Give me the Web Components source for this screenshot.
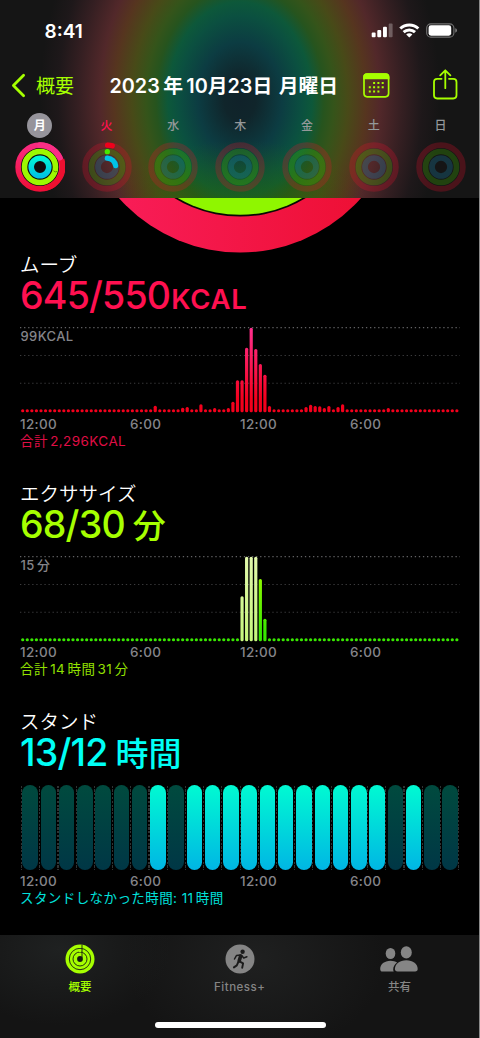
<!DOCTYPE html>
<html lang="ja">
  <head>
    <meta charset="utf-8">
    <title>フィットネス</title>
    <style>
      html, body {
        margin: 0;
        background: #000;
      }

      body {
        font-family: Inter, "Noto Sans CJK JP", sans-serif;
        color: #fff;
      }
    </style>
  </head>
  <body>

    <fitness-app></fitness-app>

    <script>
      (function fitness(document, customElements) {
        'use strict';

        const SVG_ICONS = {
          back: `<svg width="15" height="25" viewBox="0 0 15 25" fill="none" stroke="currentColor" stroke-width="2.8" stroke-linecap="round" stroke-linejoin="round"><path d="M12.6 2.3 2.4 12.5l10.2 10.2"/></svg>`,
          calendar: `<svg width="27" height="25" viewBox="0 0 27 25"><rect x="1" y="1" width="24.6" height="22.8" rx="3.2" fill="none" stroke="currentColor" stroke-width="1.7"/><path d="M.2 6.3V4A3.8 3.8 0 0 1 4 .2h18.6A3.8 3.8 0 0 1 26.4 4v2.3z" fill="currentColor"/><path d="M10.1 10h2m2.3 0h2m2.3 0h2M5.800 14.300h2m2.300 0h2m2.300 0h2m2.300 0h2M5.800 18.500h2m2.300 0h2m2.300 0h2" stroke="currentColor" stroke-width="1.9"/></svg>`,
          share: `<svg width="25" height="31" viewBox="0 0 25 31" fill="none" stroke="currentColor" stroke-width="1.8" stroke-linecap="round" stroke-linejoin="round"><path d="M8.6 9.8H4.2A3.2 3.2 0 0 0 1 13v13.3a3.2 3.2 0 0 0 3.2 3.2h16.1a3.2 3.2 0 0 0 3.2-3.2V13a3.2 3.2 0 0 0-3.2-3.2H16"/><path d="M12.3 19.2V1.4M7.2 6.4l5.1-5.1 5.1 5.1"/></svg>`,
          signal: `<svg width="22" height="15" viewBox="0 0 22 15" fill="#fff"><rect x=".7" y="9.6" width="3.9" height="4.7" rx="1"/><rect x="6.3" y="7" width="3.9" height="7.3" rx="1"/><rect x="12" y="3.7" width="3.9" height="10.6" rx="1"/><rect x="17.7" y=".4" width="3.9" height="13.9" rx="1" opacity=".28"/></svg>`,
          wifi: `<svg width="21" height="15" viewBox="0 0 21 15" fill="none" stroke="#fff" stroke-width="3"><path d="M1.300 5.500a13 13 0 0 1 18 0"/><path d="M4.600 9.200a8.300 8.300 0 0 1 11.400 0"/><path d="M10.300 14.500 7.200 11.500a4.400 4.400 0 0 1 6.200 0z" fill="#fff" stroke="none"/></svg>`,
          battery: `<svg width="32" height="15" viewBox="0 0 32 15"><rect x=".7" y=".9" width="27.2" height="13.2" rx="4.2" fill="none" stroke="#fff" stroke-opacity=".4" stroke-width="1.1"/><rect x="2.6" y="2.3" width="22.600" height="10.400" rx="2.400" fill="#fff"/><path d="M29.3 5.3v4.4c1-.3 1.7-1.2 1.7-2.2s-.7-1.900-1.700-2.200z" fill="#fff" opacity=".45"/></svg>`,
          rings: `<svg width="30" height="30" viewBox="0 0 30 30"><circle cx="15" cy="15" r="14.500" fill="currentColor"/><g fill="none" stroke="#161a12" stroke-width=".9"><circle cx="15" cy="15" r="10.700"/><circle cx="15" cy="15" r="7"/></g><circle cx="15" cy="15" r="2.900" fill="#161a12"/><path d="M17 .7v13" stroke="#161a12" stroke-width=".9"/><path d="M15 4.100V1M15 8V5M15 12V9" stroke="currentColor" stroke-width="2"/></svg>`,
          runner: `<svg width="30" height="30" viewBox="0 0 30 30"><circle cx="15" cy="15" r="14.500" fill="currentColor"/><circle cx="17.600" cy="7.700" r="2.200" fill="#1b1b1b"/><g fill="none" stroke="#1b1b1b" stroke-linecap="round" stroke-linejoin="round"><path d="M15.700 12 14.200 16.800" stroke-width="3.600"/><path d="M15.500 11l-4.100.6-1.900 3.400M16.900 11.800l1.800 2.200 3.200-1.300" stroke-width="1.500"/><path d="M14.500 17.400l3.600 2-.9 4.400M13.300 18l-1.500 3.400-2.900 2" stroke-width="1.900"/></g></svg>`,
          people: `<svg width="38" height="26" viewBox="0 0 38 26" fill="currentColor"><ellipse cx="10.500" cy="7.500" rx="4.800" ry="5.500"/><ellipse cx="26.300" cy="6.400" rx="5.500" ry="6.100"/><path d="M.2 22.900c0-4.500 4.200-8.100 10.300-8.100 2.700 0 4.900.7 6.600 1.800-2.600 1.900-3.900 4.400-3.900 7 0 .7.100 1.300.5 1.900H2.600C1 25.500.2 24.600.2 22.900z"/><path d="M14.900 23.100c0-4.900 4.700-8.800 11.400-8.800s11.400 3.900 11.400 8.800c0 1.600-.9 2.400-2.600 2.400H17.500c-1.700 0-2.600-.8-2.600-2.400z"/></svg>`
        };

        class AppIcon extends HTMLElement {
          constructor() {
            super();
            this.attachShadow({mode: 'open'});
          }

          connectedCallback() {
            this.shadowRoot.innerHTML = `
              <style>
                :host { display: block; line-height: 0; }
                svg { display: block; }
              </style>
              ${SVG_ICONS[this.getAttribute('name')]}
            `;
          }
        }

        class StatusBar extends HTMLElement {
          constructor() {
            super();
            this.attachShadow({mode: 'open'}).innerHTML = `
              <style>
                :host {
                  display: flex;
                  align-items: center;
                  height: 61px;
                  box-sizing: border-box;
                  padding: 0 21.500px 0 44.500px;
                  font-size: 19px;
                  font-weight: 600;
                }
                .time { flex: 1; padding-top: 1px; }
                app-icon + app-icon { margin-left: 6px; }
              </style>
              <span class="time">8:41</span>
              <app-icon name="signal"></app-icon>
              <app-icon name="wifi"></app-icon>
              <app-icon name="battery"></app-icon>
            `;
          }
        }

        class NavBar extends HTMLElement {
          constructor() {
            super();
            this.attachShadow({mode: 'open'}).innerHTML = `
              <style>
                :host {
                  display: flex;
                  align-items: center;
                  height: 48px;
                  box-sizing: border-box;
                  padding: 0 21.500px 0 11px;
                  color: #a6ff00;
                  white-space: nowrap;
                }
                .back { display: flex; align-items: center; gap: 10px; width: 98.500px; font-size: 19px; }
                .back span, .title { margin-top: -2px; }
                .title { flex: 1; color: #fff; font-size: 19.800px; font-weight: 600; word-spacing: 1.500px; }
                .share { margin: -2px 0 0 42.500px; }
              </style>
              <div class="back"><app-icon name="back"></app-icon><span>概要</span></div>
              <div class="title"><slot></slot></div>
              <app-icon name="calendar"></app-icon>
              <app-icon class="share" name="share"></app-icon>
            `;
          }
        }

        // One weekday with its miniature activity rings
        class DayRings extends HTMLElement {
          constructor() {
            super();
            this.attachShadow({mode: 'open'});
          }

          connectedCallback() {
            const state = this.getAttribute('state') || 'empty';
            const tracks = `
              <circle cx="25" cy="25" r="21.900" stroke="#e8102c"/>
              <circle cx="25" cy="25" r="15.500" stroke="#48c800"/>
              <circle cx="25" cy="25" r="9" stroke="#1a94c0"/>`;
            const drawings = {
              empty: `<g opacity=".25" stroke-width="5.700">${tracks}</g>`,
              today: `<g opacity=".25" stroke-width="5.700">${tracks}</g>
                <g stroke-width="5.200" stroke-linecap="round">
                  <path d="M25.500 3.100a22 22 0 0 1 4.800.7" stroke="#f0001c"/>
                  <path d="M25.300 9.700h.1" stroke="#48e800"/>
                  <path d="M25.300 16.100a9 9 0 0 1 8.300 7.600" stroke="#00c4e8"/>
                </g>`,
              full: `
                <defs>
                  <linearGradient id="m" x1="0" y1="0" x2="0" y2="1"><stop offset="0" stop-color="#fa2a80"/><stop offset="1" stop-color="#ee1038"/></linearGradient>
                  <linearGradient id="s" x1="0" y1="0" x2="0" y2="1"><stop offset="0" stop-color="#00f4d8"/><stop offset="1" stop-color="#00c4e4"/></linearGradient>
                </defs>
                <circle cx="25" cy="25" r="24.800" fill="#100d0e"/>
                <g stroke-width="5.600">
                  <circle cx="25" cy="25" r="21.900" stroke="url(#m)"/>
                  <path d="M46.500 17.500A22 22 0 0 1 30 46.300" stroke="#ec1030"/>
                  <path d="M25 3.100a21.900 21.900 0 0 1 19.800 12.600" stroke="#fb2f85" stroke-linecap="round"/>
                  <circle cx="25" cy="25" r="15.500" stroke="#9cf800"/>
                  <circle cx="25" cy="25" r="8.800" stroke="url(#s)"/>
                </g>
                <path d="M38.500 28.800q1.800 2 3.500.5" stroke="#5a9800" stroke-width="1"/>`
            };
            this.shadowRoot.innerHTML = `
              <style>
                :host {
                  display: flex;
                  flex: 1;
                  flex-direction: column;
                  align-items: center;
                  color: #94989a;
                  font-size: 12px;
                  font-weight: 500;
                }
                .name {
                  width: 25px;
                  height: 25px;
                  border-radius: 50%;
                  line-height: 26.500px;
                  text-align: center;
                }
                :host([state="full"]) .name { background: #96949b; color: #fff; font-weight: 700; }
                :host([state="today"]) { color: #ff1050; }
                svg { margin-top: 4px; }
              </style>
              <span class="name"><slot></slot></span>
              <svg width="50" height="50" viewBox="0 0 50 50" fill="none">${drawings[state]}</svg>
            `;
          }
        }

        class AppHeader extends HTMLElement {
          constructor() {
            super();
            this.attachShadow({mode: 'open'}).innerHTML = `
              <style>
                :host {
                  display: block;
                  height: 198px;
                  background:
                    radial-gradient(ellipse 130px 75px at 240px 215px, rgba(44, 104, 0, .6), rgba(44, 104, 0, 0)),
                    radial-gradient(ellipse 200px 270px at 240px 99px, #10222a 0, #10252b 8%, #0c3c42 21%, #0b5040 31%, #0d583a 36%, #26541e 42%, #35541a 47%, #484a18 54%, #56351f 63%, #52282a 70%, #351f22 81%, #1e181a 91%, #151515 100%);
                }
                .week { display: flex; padding: 4px 5px 0 6.300px; }
              </style>
              <status-bar></status-bar>
              <nav-bar><slot name="title"></slot></nav-bar>
              <div class="week"><slot></slot></div>
            `;
          }
        }

        // Lower edge of the day's rings, the rest is behind the header
        class RingsEdge extends HTMLElement {
          constructor() {
            super();
            this.attachShadow({mode: 'open'}).innerHTML = `
              <style>
                :host { display: block; height: 55px; }
                svg { display: block; }
              </style>
              <svg width="479" height="55" viewBox="0 198 479 55">
                <defs>
                  <linearGradient id="move"><stop offset=".15" stop-color="#f81c56"/><stop offset=".85" stop-color="#ee1036"/></linearGradient>
                </defs>
                <circle cx="240" cy="91" r="161.600" fill="url(#move)"/>
                <circle cx="240" cy="91" r="125.600" fill="#080a04"/>
                <circle cx="240" cy="91" r="123.800" fill="#8ff600"/>
              </svg>
            `;
          }
        }

        // Quarter-hour bars, "values" holds index:height pairs above the resting dots
        class BarChart extends HTMLElement {
          constructor() {
            super();
            this.attachShadow({mode: 'open'});
          }

          connectedCallback() {
            const heights = new Map((this.getAttribute('values') || '').split(' ').map(p => p.split(':').map(Number)));
            const green = this.getAttribute('kind') === 'exercise';
            let bars = '';
            for (let i = 0; i < 96; i++) {
              const h = heights.get(i) || 3.1;
              const x = 1.1 + i * 4.57;
              const pale = green && i >= 48 && i <= 51;
              bars += `<rect x="${x.toFixed(2)}" y="${(85.3 - h).toFixed(2)}" width="3.2" height="${h}" rx="1.5" fill="url(#${pale ? 'pale' : 'bar'})"/>`;
            }
            this.shadowRoot.innerHTML = `
              <style>
                :host { display: block; position: relative; height: 86px; }
                svg { display: block; }
                .max {
                  position: absolute;
                  left: .500px;
                  top: 1px;
                  color: #85858a;
                  font-size: 13px;
                  font-weight: 500;
                  line-height: 16px;
                  letter-spacing: .4px;
                }
              </style>
              <svg width="440" height="86" viewBox="0 0 440 86">
                <defs>
                  <linearGradient id="bar" gradientUnits="userSpaceOnUse" x1="0" y1="0" x2="0" y2="85">
                    <stop offset="0" stop-color="${green ? '#b0ff00' : '#ff3090'}"/>
                    <stop offset="${green ? '.9' : '.85'}" stop-color="${green ? '#38e800' : '#f4001c'}"/>
                  </linearGradient>
                  <linearGradient id="pale" gradientUnits="userSpaceOnUse" x1="0" y1="0" x2="0" y2="85">
                    <stop offset="0" stop-color="#e2f8ac"/><stop offset="1" stop-color="#c6f67c"/>
                  </linearGradient>
                </defs>
                <g stroke-width="1.1" stroke-dasharray="1.3 2.77">
                  <path d="M0 .6h440" stroke="#626264"/>
                  <path d="M0 28.5h440M0 56.3h440" stroke="#3c3c3e"/>
                </g>
                ${bars}
              </svg>
              <span class="max"><slot></slot></span>
            `;
          }
        }

        class StandChart extends HTMLElement {
          constructor() {
            super();
            this.attachShadow({mode: 'open'});
          }

          connectedCallback() {
            const hours = this.getAttribute('hours');
            this.shadowRoot.innerHTML = `
              <style>
                :host {
                  display: grid;
                  grid-template-columns: repeat(24, 1fr);
                  width: 438.200px;
                  height: 86px;
                  margin-left: .500px;
                  background: repeating-linear-gradient(#000 0 1.600px, transparent 1.600px 3.800px), repeating-linear-gradient(90deg, #303334 0 1.100px, transparent 1.100px 18.210px);
                }
                i {
                  height: 85px;
                  margin: .500px .900px 0 1.900px;
                  border-radius: 8px;
                  background: linear-gradient(#004a3e, #003746);
                }
                i.on { background: linear-gradient(#00fad2, #00b6e4); }
              </style>
              ${[...hours].map(h => `<i class="${h === '1' ? 'on' : ''}"></i>`).join('')}
            `;
          }
        }

        class ActivitySection extends HTMLElement {
          constructor() {
            super();
            this.attachShadow({mode: 'open'}).innerHTML = `
              <style>
                :host {
                  display: block;
                  height: 228.700px;
                  padding-left: 20px;
                  white-space: nowrap;
                }
                .title { height: 24px; font-size: 19.500px; line-height: 25px; font-weight: 350; }
                .value { height: 50px; color: var(--accent); font-size: 37.500px; line-height: 38px; font-weight: 500; letter-spacing: -.800px; }
                .hours { display: grid; grid-template-columns: repeat(4, 110px); height: 16px; padding-top: 2.500px; color: #85858a; font-size: 13.500px; font-weight: 500; line-height: 16px; letter-spacing: .300px; }
                .total { color: var(--accent); opacity: .88; font-size: 13.500px; line-height: 18.500px; letter-spacing: .420px; }
              </style>
              <div class="title"><slot name="title"></slot></div>
              <div class="value"><slot name="value"></slot></div>
              <slot></slot>
              <div class="hours"><span>12:00</span><span>6:00</span><span>12:00</span><span>6:00</span></div>
              <div class="total"><slot name="total"></slot></div>
            `;
          }
        }

        class TabItem extends HTMLElement {
          constructor() {
            super();
            this.attachShadow({mode: 'open'});
          }

          connectedCallback() {
            this.shadowRoot.innerHTML = `
              <style>
                :host {
                  display: flex;
                  flex: 1;
                  flex-direction: column;
                  align-items: center;
                  color: #858585;
                  font-size: 11.500px;
                  font-weight: 500;
                }
                :host([active]) { color: #a6ff00; }
                .icon { display: grid; place-items: center; height: 31px; }
                .label { margin: 5px 0 0 .500px; line-height: 16px; letter-spacing: var(--tracking, 0); }
              </style>
              <div class="icon"><app-icon name="${this.getAttribute('icon')}"></app-icon></div>
              <span class="label"><slot></slot></span>
            `;
          }
        }

        class TabBar extends HTMLElement {
          constructor() {
            super();
            this.attachShadow({mode: 'open'}).innerHTML = `
              <style>
                :host {
                  display: flex;
                  flex-direction: column;
                  align-items: center;
                  height: 103px;
                  background:
                    radial-gradient(ellipse 110px 75px at 60px 15px, #1f2121, transparent),
                    radial-gradient(ellipse 130px 95px at 255px 25px, #1f2020, transparent),
                    #141414;
                }
                .tabs { display: flex; width: 100%; height: 86.500px; padding-top: 8px; box-sizing: border-box; }
                .home { width: 171px; height: 6.500px; border-radius: 4px; background: #fff; margin-left: 1px; }
              </style>
              <div class="tabs"><slot></slot></div>
              <div class="home"></div>
            `;
          }
        }

        class FitnessApp extends HTMLElement {
          constructor() {
            super();
            this.attachShadow({mode: 'open'}).innerHTML = `
              <style>
                :host {
                  display: flex;
                  flex-direction: column;
                  width: 479px;
                  height: 1038px;
                  overflow: hidden;
                  border-right: 1px solid #8a8a8a;
                  background: #000;
                }
                main { flex: 1; min-height: 0; overflow: hidden; }
                .gap { margin-left: .17em; }
                .kcal { font-size: 27.500px; letter-spacing: .700px; margin-left: 1px; font-weight: 600; }
                .unit { font-size: 33px; letter-spacing: 0; margin-left: 8px; }
                .move { --accent: #ff1050; }
                .exercise { --accent: #a6ff00; }
                .stand { --accent: #00fff6; }
                tab-item[icon="runner"] { --tracking: .500px; }
              </style>
              <app-header>
                <span slot="title">2023<span class="gap">年</span><span class="gap">10月23日 月曜日</span></span>
                <day-rings state="full">月</day-rings>
                <day-rings state="today">火</day-rings>
                <day-rings>水</day-rings>
                <day-rings>木</day-rings>
                <day-rings>金</day-rings>
                <day-rings>土</day-rings>
                <day-rings>日</day-rings>
              </app-header>
              <main>
                <rings-edge></rings-edge>
                <activity-section class="move">
                  <span slot="title">ムーブ</span>
                  <span slot="value">645/550<span class="kcal">KCAL</span></span>
                  <bar-chart kind="move" values="29:6.6 35:4.6 36:5.3 39:8 42:4.3 45:4.3 46:10.6 47:32 48:32 49:64.6 50:84.6 51:63.3 52:48.3 53:37.6 54:6.3 62:5.3 63:7.6 64:6.3 65:6 66:4.3 67:6.3 69:5.3 70:8 80:4.3">99KCAL</bar-chart>
                  <span slot="total">合計<span class="gap">2,296KCAL</span></span>
                </activity-section>
                <activity-section class="exercise">
                  <span slot="title">エクササイズ</span>
                  <span slot="value">68/30<span class="unit">分</span></span>
                  <bar-chart kind="exercise" values="48:45 49:84.6 50:84.6 51:84.6 52:62.3 53:22.6">15<span class="gap">分</span></bar-chart>
                  <span slot="total">合計<span class="gap">14</span><span class="gap">時間</span><span class="gap">31</span><span class="gap">分</span></span>
                </activity-section>
                <activity-section class="stand">
                  <span slot="title">スタンド</span>
                  <span slot="value">13/12<span class="unit">時間</span></span>
                  <stand-chart hours="000000010111111111110100"></stand-chart>
                  <span slot="total">スタンドしなかった時間: 11<span class="gap">時間</span></span>
                </activity-section>
              </main>
              <tab-bar>
                <tab-item icon="rings" active>概要</tab-item>
                <tab-item icon="runner">Fitness+</tab-item>
                <tab-item icon="people">共有</tab-item>
              </tab-bar>
            `;
          }
        }

        customElements.define('app-icon', AppIcon);
        customElements.define('status-bar', StatusBar);
        customElements.define('nav-bar', NavBar);
        customElements.define('day-rings', DayRings);
        customElements.define('app-header', AppHeader);
        customElements.define('rings-edge', RingsEdge);
        customElements.define('bar-chart', BarChart);
        customElements.define('stand-chart', StandChart);
        customElements.define('activity-section', ActivitySection);
        customElements.define('tab-item', TabItem);
        customElements.define('tab-bar', TabBar);
        customElements.define('fitness-app', FitnessApp);
      })(document, window.customElements);
    </script>
  </body>
</html>
